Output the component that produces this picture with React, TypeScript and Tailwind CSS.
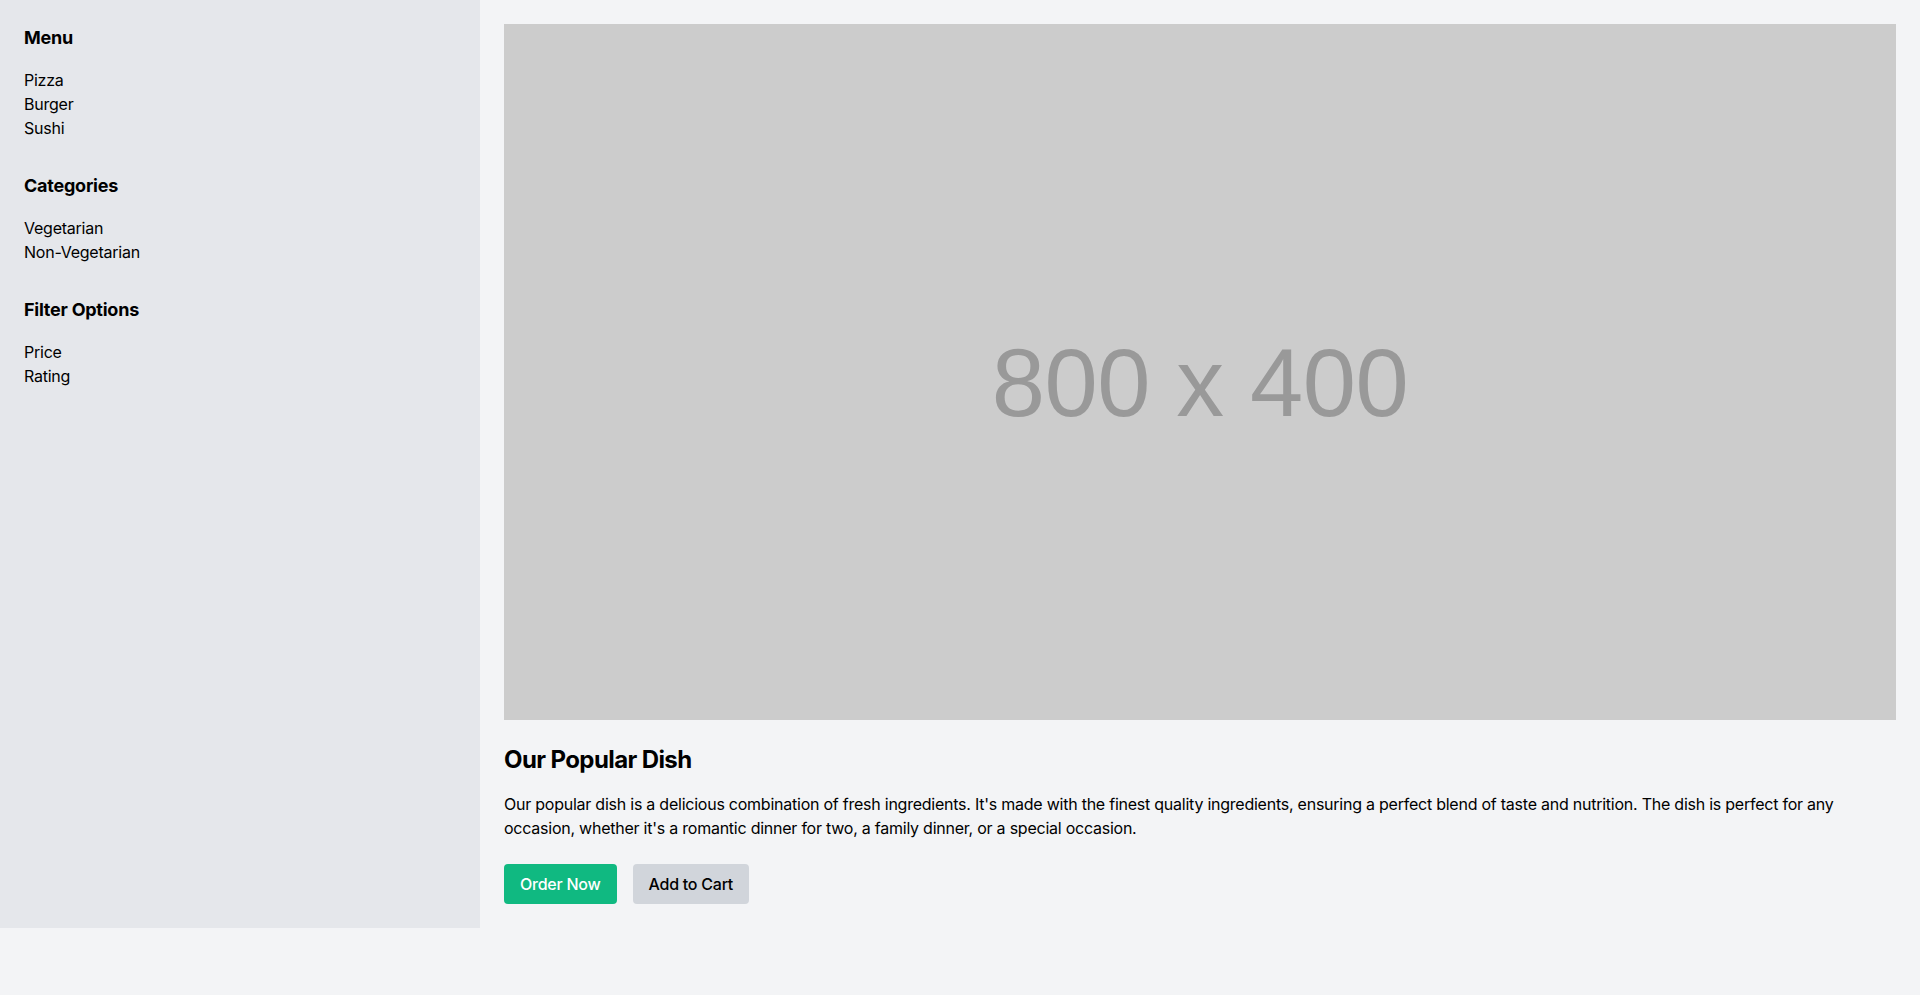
import React from 'react';

const SECTIONS = [
  { title: 'Menu', items: ['Pizza', 'Burger', 'Sushi'] },
  { title: 'Categories', items: ['Vegetarian', 'Non-Vegetarian'] },
  { title: 'Filter Options', items: ['Price', 'Rating'] },
];

const Placeholder: React.FC = () => (
  <svg viewBox="0 0 800 400" className="block w-full h-auto">
    <rect width="800" height="400" fill="#cccccc" />
    <text
      x="400"
      y="225"
      textAnchor="middle"
      fontSize="55"
      fill="#999999"
      style={{ fontFamily: '"Liberation Sans", Arial, sans-serif' }}
    >
      800 x 400
    </text>
  </svg>
);

export default function App() {
  return (
    <div className="min-h-screen bg-[#f3f4f6] text-black font-['Inter',sans-serif] tracking-[-0.015em]">
      <div className="flex">
        {/* Sidebar */}
        <aside className="w-[480px] shrink-0 bg-[#e5e7eb] p-6">
          {SECTIONS.map((s, i) => (
            <div key={s.title} className={i < SECTIONS.length - 1 ? 'mb-8' : ''}>
              <h2 className="text-lg leading-7 font-bold mb-4">{s.title}</h2>
              <ul>
                {s.items.map((item) => (
                  <li key={item} className="text-base leading-6">{item}</li>
                ))}
              </ul>
            </div>
          ))}
        </aside>

        {/* Main */}
        <main className="flex-1 p-6">
          <Placeholder />
          <h1 className="mt-6 mb-4 text-2xl leading-8 font-bold tracking-[-0.025em]">Our Popular Dish</h1>
          <p className="text-base leading-6">
            Our popular dish is a delicious combination of fresh ingredients. It's made with the finest quality ingredients, ensuring a perfect blend of taste and nutrition. The dish is perfect for any occasion, whether it's a romantic dinner for two, a family dinner, or a special occasion.
          </p>
          <div className="mt-6 flex gap-4">
            <button className="h-10 px-4 rounded bg-[#10b981] text-white font-medium">Order Now</button>
            <button className="h-10 px-4 rounded bg-[#d1d5db] text-black font-medium">Add to Cart</button>
          </div>
        </main>
      </div>
    </div>
  );
}
